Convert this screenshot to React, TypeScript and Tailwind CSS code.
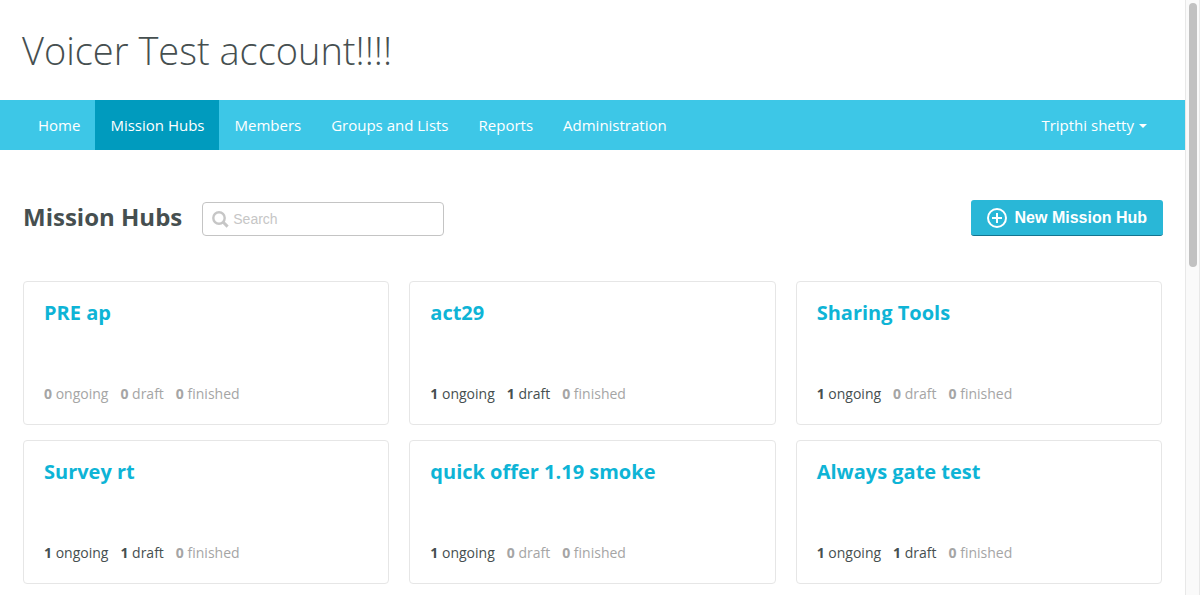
import clsx from "clsx";

type Hub = { name: string; ongoing: number; draft: number; finished: number };

const hubs: Hub[] = [
  { name: "PRE ap", ongoing: 0, draft: 0, finished: 0 },
  { name: "act29", ongoing: 1, draft: 1, finished: 0 },
  { name: "Sharing Tools", ongoing: 1, draft: 0, finished: 0 },
  { name: "Survey rt", ongoing: 1, draft: 1, finished: 0 },
  { name: "quick offer 1.19 smoke", ongoing: 1, draft: 0, finished: 0 },
  { name: "Always gate test", ongoing: 1, draft: 1, finished: 0 },
];

const links = ["Home", "Mission Hubs", "Members", "Groups and Lists", "Reports", "Administration"];

function Count({ value, label }: { value: number; label: string }) {
  return (
    <li className={value > 0 ? "text-[#464f50]" : "text-[#a5a5a5]"}>
      <b className="font-bold">{value}</b> {label}
    </li>
  );
}

function HubCard({ hub }: { hub: Hub }) {
  return (
    <article className="flex h-36 flex-col justify-between rounded border border-[#e6e6e6] px-5 pt-4 pb-5">
      <h2 className="text-xl leading-[30px] font-bold text-[#0eb4d6]">
        <a href="#">{hub.name}</a>
      </h2>
      <ul className="flex gap-3 text-sm leading-5">
        <Count value={hub.ongoing} label="ongoing" />
        <Count value={hub.draft} label="draft" />
        <Count value={hub.finished} label="finished" />
      </ul>
    </article>
  );
}

function NavBar() {
  return (
    <nav className="flex h-[50px] items-stretch justify-between bg-[#3dc7e7] px-[23px] text-[15px] text-white">
      <ul className="flex">
        {links.map((link) => (
          <li key={link} className="flex">
            <a
              href="#"
              className={clsx(
                "flex items-center px-[15px] pt-px",
                link === "Mission Hubs" && "bg-[#009bbe]"
              )}
            >
              {link}
            </a>
          </li>
        ))}
      </ul>
      <button type="button" className="flex items-center gap-[5px] px-[15px] pt-px">
        Tripthi shetty
        <svg width="8" height="4" viewBox="0 0 8 4" fill="currentColor" aria-hidden="true">
          <path d="M0 0h8L4 4z" />
        </svg>
      </button>
    </nav>
  );
}

function Toolbar() {
  return (
    <div className="flex items-start justify-between">
      <div className="flex items-start gap-5">
        <h1 className="text-2xl leading-[34px] font-bold text-[#464f50]">Mission Hubs</h1>
        <label className="mt-0.5 flex h-[34px] w-[242px] items-center rounded border border-[#c4c4c4] px-[9px]">
          <svg width="17" height="17" viewBox="0 0 17 17" fill="none" stroke="#c6c6c6" aria-hidden="true">
            <circle cx="7" cy="7" r="5.7" strokeWidth="2.4" />
            <path d="M11 11l4.6 4.6" strokeWidth="3" />
          </svg>
          <input
            type="text"
            aria-label="Search"
            placeholder="Search"
            className="ml-1 min-w-0 flex-1 font-['Liberation_Sans',Arial,sans-serif] text-sm outline-none placeholder:text-[#c6c6c6]"
          />
        </label>
      </div>
      <button
        type="button"
        className="flex h-9 items-center gap-2 rounded-[3px] border-b border-[#14748f] bg-[#29b7d7] px-4 font-['Liberation_Sans',Arial,sans-serif] text-base font-bold text-white"
      >
        <svg width="20" height="20" viewBox="0 0 20 20" fill="none" stroke="currentColor" strokeWidth="2" aria-hidden="true">
          <circle cx="10" cy="10" r="9" />
          <path d="M10 5v10M5 10h10" />
        </svg>
        New Mission Hub
      </button>
    </div>
  );
}

export default function App() {
  return (
    <div className="flex h-screen overflow-hidden bg-white font-['Open_Sans',sans-serif]">
      <div className="min-w-0 flex-1">
        <header className="flex h-[100px] items-center px-[22px]">
          <p className="text-[38px] leading-none font-light text-[#464f50]">Voicer Test account!!!!</p>
        </header>
        <NavBar />
        <main className="pt-[50px] pr-[22px] pl-[23px]">
          <Toolbar />
          <section className="mt-[45px] grid grid-cols-3 gap-x-5 gap-y-[15px] pr-px">
            {hubs.map((hub) => (
              <HubCard key={hub.name} hub={hub} />
            ))}
          </section>
        </main>
      </div>
      <aside aria-hidden="true" className="w-[15px] border-x border-[#e8e8e8] bg-[#fafafa] px-[3px] pt-[3px]">
        <div className="h-[264px] w-2 rounded-full bg-[#c1c1c1]" />
      </aside>
    </div>
  );
}
